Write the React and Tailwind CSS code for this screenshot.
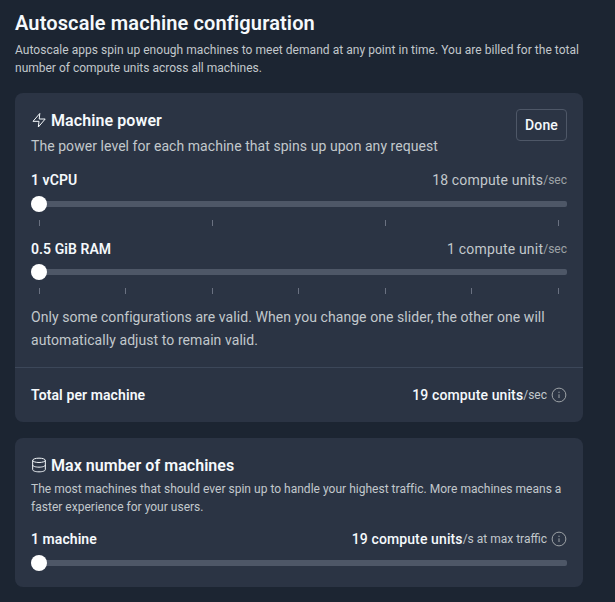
import React from "react";

function BoltIcon() {
  return (
    <svg className="-mt-0.5 size-4 shrink-0" viewBox="0 0 24 24" fill="none" stroke="currentColor" strokeWidth="1.5" strokeLinejoin="round">
      <path d="M13.2 2.2 3 14h9l-1 8.500L21.300 10.500h-9z" />
    </svg>
  );
}

function DatabaseIcon() {
  return (
    <svg className="-mt-0.5 size-4 shrink-0" viewBox="0 0 24 24" fill="none" stroke="currentColor" strokeWidth="1.5">
      <ellipse cx="12" cy="5" rx="9.5" ry="3.25" />
      <path d="M2.5 5v14c0 1.8 4.2 3.25 9.5 3.25s9.500-1.450 9.500-3.250V5" />
      <path d="M2.500 12c0 1.800 4.200 3.250 9.500 3.250s9.500-1.450 9.500-3.250" />
    </svg>
  );
}

function InfoIcon() {
  return (
    <svg className="ml-1 size-4 shrink-0 text-[#9da2a6]" viewBox="0 0 24 24" fill="none" stroke="currentColor" strokeWidth="1.5">
      <circle cx="12" cy="12" r="10.3" />
      <path d="M12 11v5.500" />
      <path d="M12 7v2" />
    </svg>
  );
}

function Slider({ ticks = 0 }) {
  return (
    <>
      <div className="mt-1.5 flex h-4 items-center">
        <div className="relative z-10 size-4 shrink-0 rounded-full bg-white" />
        <div className="-ml-4 h-1.5 flex-1 rounded-[2px] bg-[#4e5767]" />
      </div>
      {ticks > 0 && (
        <div className="mt-2 flex h-1.5 justify-between pr-[8.3px] pl-2">
          {Array.from({ length: ticks }, (_, i) => (
            <span key={i} className="w-px bg-[#6a7181]" />
          ))}
        </div>
      )}
    </>
  );
}

function Row({ label, children }) {
  return (
    <div className="flex h-5 items-center justify-between text-sm leading-5">
      <span className="font-semibold tracking-[0.06px]">{label}</span>
      <span className="flex items-center">{children}</span>
    </div>
  );
}

export default function App() {
  return (
    <main className="h-[602px] w-[615px] bg-[#1c2532] px-[15px] pt-[11px] font-['Roboto','Liberation_Sans',sans-serif] whitespace-nowrap text-[#f5f9fc]">
      <div className="w-[568px]">
        <h1 className="text-xl leading-6 font-semibold tracking-[0.12px]">Autoscale machine configuration</h1>
        <p className="mt-1.5 text-xs leading-[18px] text-[#c2c8cc]">
          <span className="tracking-[0.042px]">
            Autoscale apps spin up enough machines to meet demand at any point in time. You are billed for the total
          </span>
          <br />
          number of compute units across all machines.
        </p>

        <section className="mt-4 h-[329px] rounded-lg bg-[#2b3444]">
          <div className="h-[274px] px-4 pt-4">
            <div className="flex h-[61px] items-start justify-between">
              <div>
                <h2 className="flex items-center gap-1 text-base leading-6 font-semibold tracking-[0.09px]">
                  <BoltIcon />
                  Machine power
                </h2>
                <p className="mt-0.5 text-sm leading-[23px] tracking-[0.057px] text-[#c2c8cc]">
                  The power level for each machine that spins up upon any request
                </p>
              </div>
              <button className="h-8 w-[51px] rounded border border-[#4e5767] text-sm leading-5 font-medium tracking-[0.1px]">
                Done
              </button>
            </div>
            <Row label="1 vCPU">
              <span className="tracking-[0.156px] text-[#c2c8cc]">18 compute units</span>
              <span className="text-xs leading-5 text-[#9da2a6]">/sec</span>
            </Row>
            <Slider ticks={4} />
            <div className="h-[13px]" />
            <Row label="0.5 GiB RAM">
              <span className="tracking-[0.2px] text-[#c2c8cc]">1 compute unit</span>
              <span className="text-xs leading-5 text-[#9da2a6]">/sec</span>
            </Row>
            <div className="-mt-px">
              <Slider ticks={7} />
            </div>
            <p className="mt-3 text-sm leading-[23px] tracking-[0.07px] text-[#c2c8cc]">
              Only some configurations are valid. When you change one slider, the other one will
              <br />
              automatically adjust to remain valid.
            </p>
          </div>
          <div className="border-t border-[#3c4759] px-4 pt-[17px]">
            <Row label={<span className="tracking-[0.1px]">Total per machine</span>}>
              <span className="font-medium tracking-[0.11px]">19 compute units</span>
              <span className="text-xs leading-5 text-[#c2c8cc]">/sec</span>
              <InfoIcon />
            </Row>
          </div>
        </section>

        <section className="mt-4 h-[149px] rounded-lg bg-[#2b3444] p-4">
          <h2 className="flex items-center gap-1 text-base leading-6 font-semibold tracking-[0.05px]">
            <DatabaseIcon />
            Max number of machines
          </h2>
          <p className="mt-0.5 mb-[13px] text-xs leading-[18px] tracking-[0.016px] text-[#c2c8cc]">
            The most machines that should ever spin up to handle your highest traffic. More machines means a
            <br />
            faster experience for your users.
          </p>
          <Row label="1 machine">
            <span className="font-medium tracking-[0.11px]">19 compute units</span>
            <span className="text-xs leading-5 text-[#c2c8cc]">/s at max traffic</span>
            <InfoIcon />
          </Row>
          <Slider />
        </section>
      </div>
    </main>
  );
}
